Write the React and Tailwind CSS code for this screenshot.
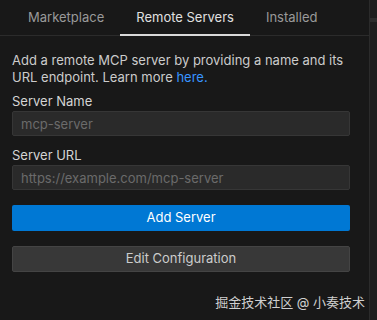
import React from 'react';

const Tabs = () => {
  const tabs = ['Marketplace', 'Remote Servers', 'Installed'];
  return (
    <div className="flex h-[36px] border-b border-[#2b2b2b] pl-[12px]">
      {tabs.map((t) => (
        <div
          key={t}
          className={
            t === 'Remote Servers'
              ? 'flex items-center pt-[1px] px-[16px] text-[#e0e0e0] border-b-2 border-[#d8d8d8] -mb-px'
              : 'flex items-center pt-[1px] px-[16px] text-[#9a9a9a]'
          }
        >
          {t}
        </div>
      ))}
    </div>
  );
};

const Field = ({ label, placeholder }) => (
  <div className="flex flex-col">
    <label className="text-[13px] text-[#d4d4d4] leading-[16px] mb-[2px]">{label}</label>
    <input
      className="h-[25px] px-[8px] bg-[#2a2a2a] border border-[#363636] rounded-[2px] text-[13px] text-[#ccc] placeholder-[#6b6b6b] outline-none"
      placeholder={placeholder}
    />
  </div>
);

export default function App() {
  return (
    <div
      className="w-[377px] h-[320px] bg-[#1f1f1f] flex text-[13px]"
      style={{ fontFamily: '"Helvetica Neue", Inter, "Liberation Sans", "Noto Sans CJK SC", sans-serif' }}
    >
      <div className="w-[370px] h-full bg-[#181818] border-r border-[#2b2b2b] flex flex-col">
        <Tabs />
        <div className="pl-[12px] pr-[19px] pt-[16px] flex flex-col">
          <p className="text-[#cccccc] leading-[17px] text-[13px]">
            Add a remote MCP server by providing a name and its URL endpoint. Learn more{' '}
            <span className="text-[#3794ff]">here.</span>
          </p>
          <div className="mt-[7px] flex flex-col gap-[11px]">
            <Field label="Server Name" placeholder="mcp-server" />
            <Field label="Server URL" placeholder="https://example.com/mcp-server" />
          </div>
          <button className="mt-[15px] h-[26px] rounded-[2px] bg-[#0078d4] text-white text-[13px]">
            Add Server
          </button>
          <button className="mt-[15px] h-[26px] rounded-[2px] bg-[#383838] border border-[#444] text-[#cccccc] text-[13px]">
            Edit Configuration
          </button>
          <div className="mt-[20px] leading-[20px] text-right text-[13px] text-[#cfcfcf] -mr-[15px]">
            掘金技术社区 @ 小奏技术
          </div>
        </div>
      </div>
      <div className="flex-1 pt-[18px]">
        <div className="h-[4px] w-full bg-[#2e2e2e]" />
      </div>
    </div>
  );
}
